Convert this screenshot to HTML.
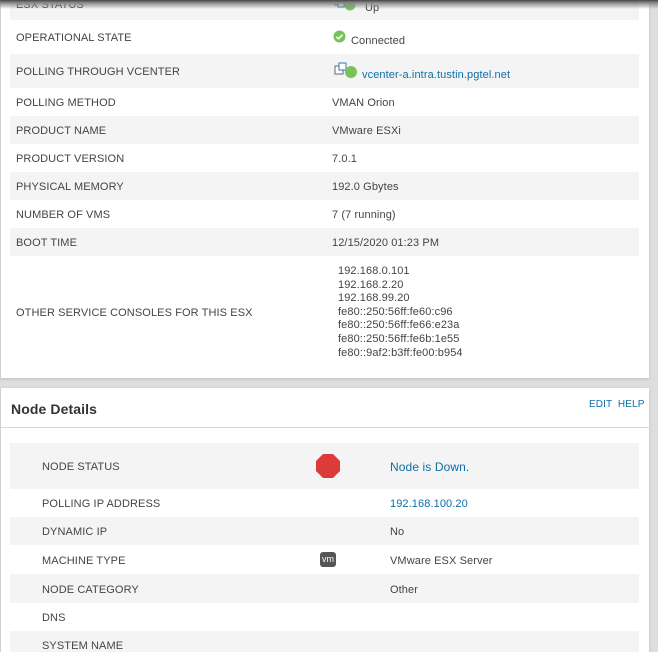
<!DOCTYPE html>
<html><head><meta charset="utf-8"><style>
*{margin:0;padding:0;box-sizing:border-box}
html,body{width:658px;height:652px;overflow:hidden}
body{background:#dedede;font-family:"Liberation Sans",sans-serif;font-size:11px;color:#333;position:relative}
.p{position:absolute;left:0;width:649px;background:#fff;border-left:1px solid #d0d0d0;box-shadow:0 1px 3px rgba(0,0,0,.15)}
.r{position:absolute;left:9px;width:629px}
.g{background:#f4f4f4}
.t{position:absolute;white-space:nowrap;color:#444;margin-top:1px;letter-spacing:.1px}
.l{color:#0d6fa8}
.shadow{position:absolute;left:0;top:0;width:658px;height:9px;background:linear-gradient(#444,#888 30%,rgba(200,200,200,0))}
</style></head><body>
<div class="p" style="top:0;height:378px">
<div class="r g" style="top:0;height:20px"></div>
<div class="r g" style="top:54px;height:34px"></div>
<div class="r g" style="top:116px;height:28px"></div>
<div class="r g" style="top:172px;height:28px"></div>
<div class="r g" style="top:228px;height:28px"></div>
<div class="t" style="left:15px;top:-2px">ESX STATUS</div>
<div class="t" style="left:364px;top:1px">Up</div>
<svg style="position:absolute;left:333px;top:-4px" width="24" height="16"><rect x="1" y="2" width="7" height="7" fill="#fff" stroke="#666"/><rect x="4" y="5" width="6" height="6" fill="#fff" stroke="#2a7ab0"/><circle cx="16" cy="9" r="5.5" fill="#77c25b"/></svg>
<div class="t" style="left:15px;top:31px">OPERATIONAL STATE</div>
<svg style="position:absolute;left:332px;top:30px" width="13" height="13"><circle cx="6.5" cy="6.5" r="6" fill="#77c25b"/><path d="M3.5 6.8l2 2 4-4" stroke="#fff" stroke-width="1.6" fill="none"/></svg>
<div class="t" style="left:350px;top:34px">Connected</div>
<div class="t" style="left:15px;top:65px">POLLING THROUGH VCENTER</div>
<svg style="position:absolute;left:333px;top:62px" width="24" height="18"><rect x="1" y="4" width="8" height="8" fill="#fff" stroke="#666"/><rect x="5" y="1" width="7" height="7" fill="#fff" stroke="#2a7ab0"/><circle cx="17" cy="10" r="6" fill="#77c25b"/></svg>
<div class="t l" style="left:361px;top:68px">vcenter-a.intra.tustin.pgtel.net</div>
<div class="t" style="left:15px;top:96px">POLLING METHOD</div><div class="t" style="left:331px;top:96px">VMAN Orion</div>
<div class="t" style="left:15px;top:124px">PRODUCT NAME</div><div class="t" style="left:331px;top:124px">VMware ESXi</div>
<div class="t" style="left:15px;top:152px">PRODUCT VERSION</div><div class="t" style="left:331px;top:152px">7.0.1</div>
<div class="t" style="left:15px;top:180px">PHYSICAL MEMORY</div><div class="t" style="left:331px;top:180px">192.0 Gbytes</div>
<div class="t" style="left:15px;top:208px">NUMBER OF VMS</div><div class="t" style="left:331px;top:208px">7 (7 running)</div>
<div class="t" style="left:15px;top:236px">BOOT TIME</div><div class="t" style="left:331px;top:236px">12/15/2020 01:23 PM</div>
<div class="t" style="left:15px;top:306px">OTHER SERVICE CONSOLES FOR THIS ESX</div>
<div class="t" style="left:337px;top:264px;line-height:13.6px">192.168.0.101<br>192.168.2.20<br>192.168.99.20<br>fe80::250:56ff:fe60:c96<br>fe80::250:56ff:fe66:e23a<br>fe80::250:56ff:fe6b:1e55<br>fe80::9af2:b3ff:fe00:b954</div>
</div>
<div class="shadow"></div>
<div class="p" style="top:388px;height:264px">
<div class="t" style="left:10px;top:12px;font-size:14px;font-weight:bold;color:#333">Node Details</div>
<div class="t l" style="left:588px;top:10px;font-size:10px">EDIT&nbsp; HELP</div>
<div style="position:absolute;left:0;top:39px;width:649px;height:1px;background:#d8d8d8"></div>
<div class="r g" style="top:55px;height:46px"></div>
<div class="r g" style="top:129px;height:28px"></div>
<div class="r g" style="top:186px;height:29px"></div>
<div class="r g" style="top:243px;height:30px"></div>
<div class="t" style="left:41px;top:72px">NODE STATUS</div>
<svg style="position:absolute;left:315px;top:66px" width="24" height="24"><polygon points="7,0 17,0 24,7 24,17 17,24 7,24 0,17 0,7" fill="#dd3a3a"/></svg>
<div class="t l" style="left:389px;top:71px;font-size:12px">Node is Down.</div>
<div class="t" style="left:41px;top:109px">POLLING IP ADDRESS</div><div class="t l" style="left:389px;top:109px">192.168.100.20</div>
<div class="t" style="left:41px;top:137px">DYNAMIC IP</div><div class="t" style="left:389px;top:137px">No</div>
<div class="t" style="left:41px;top:166px">MACHINE TYPE</div>
<div style="position:absolute;left:319px;top:164px;width:16px;height:15px;background:#555;border-radius:3px;color:#fff;font-size:9px;line-height:14px;text-align:center">vm</div>
<div class="t" style="left:389px;top:166px">VMware ESX Server</div>
<div class="t" style="left:41px;top:195px">NODE CATEGORY</div><div class="t" style="left:389px;top:195px">Other</div>
<div class="t" style="left:41px;top:223px">DNS</div>
<div class="t" style="left:41px;top:251px">SYSTEM NAME</div>
</div>
</body></html>
